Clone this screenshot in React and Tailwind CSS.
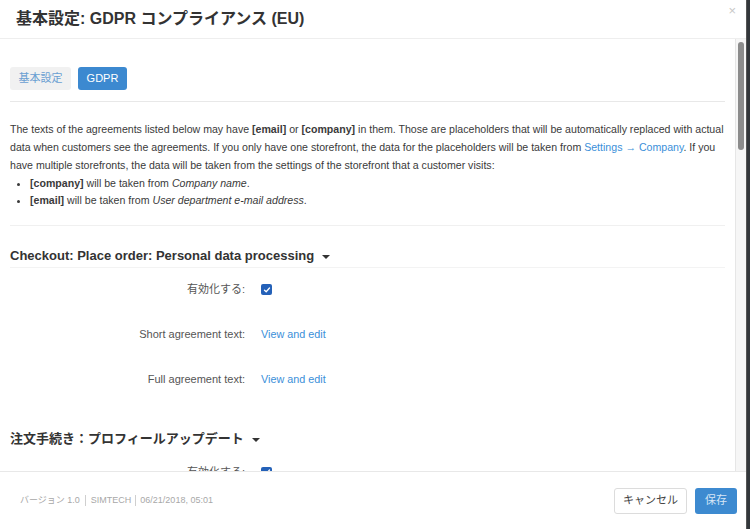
import React from "react";

const font = { fontFamily: '"Liberation Sans", "Noto Sans CJK JP", Arial, sans-serif' };

function Row({ label, children }) {
  return (
    <div className="flex items-center h-[45px]">
      <div className="w-[235px] text-right text-[11px] text-[#555]">{label}</div>
      <div className="pl-[16px] flex items-center">{children}</div>
    </div>
  );
}

function Check() {
  return (
    <span className="w-[11px] h-[11px] rounded-[2px] bg-[#2461b8] flex items-center justify-center">
      <svg width="8" height="8" viewBox="0 0 8 8">
        <path d="M1.5 4.2 L3.2 5.8 L6.5 2" stroke="white" strokeWidth="1.3" fill="none" strokeLinecap="round" strokeLinejoin="round" />
      </svg>
    </span>
  );
}

function Caret() {
  return <span className="inline-block ml-[8px] mt-[2px] w-0 h-0 border-l-[4px] border-r-[4px] border-t-[4px] border-l-transparent border-r-transparent border-t-[#333]" />;
}

export default function App() {
  return (
    <div className="w-[750px] h-[529px] flex bg-[#33373b] overflow-hidden" style={font}>
      <div className="w-[746px] h-full bg-white flex flex-col">
        <div className="h-[39px] shrink-0 border-b border-[#eeeeee] flex items-center justify-between pl-[16px] pr-[10px]">
          <div className="text-[16px] font-bold text-[#333]">基本設定: GDPR コンプライアンス (EU)</div>
          <div className="text-[13px] text-[#c8c8c8] -mt-[16px]">×</div>
        </div>
        <div className="flex-1 flex min-h-0">
          <div className="flex-1 overflow-hidden px-[10px]">
            <div className="pt-[28px] flex gap-[7px]">
              <div className="h-[23px] w-[61px] rounded-[3px] bg-[#f1f1f1] text-[#6a9fd2] text-[11px] flex items-center justify-center">基本設定</div>
              <div className="h-[23px] w-[49px] rounded-[3px] bg-[#3c89d0] text-white text-[11px] flex items-center justify-center">GDPR</div>
            </div>
            <div className="mt-[11px] border-t border-[#e8e8e8]" />
            <div className="mt-[18px] text-[10.6px] leading-[18px] text-[#3a3a3a] whitespace-nowrap">
              The texts of the agreements listed below may have <b>[email]</b> or <b>[company]</b> in them. Those are placeholders that will be automatically replaced with actual<br />
              data when customers see the agreements. If you only have one storefront, the data for the placeholders will be taken from <span className="text-[#3b8fd9]">Settings → Company</span>. If you<br />
              have multiple storefronts, the data will be taken from the settings of the storefront that a customer visits:
            </div>
            <ul className="mt-[1px] text-[10.6px] leading-[17px] text-[#3a3a3a] list-disc pl-[20px]">
              <li><b>[company]</b> will be taken from <i>Company name</i>.</li>
              <li><b>[email]</b> will be taken from <i>User department e-mail address</i>.</li>
            </ul>
            <div className="mt-[16px] border-t border-[#f0f0f0]" />
            <div className="h-[42px] border-b border-[#f3f3f3] flex items-center pt-[18px]">
              <span className="text-[13px] font-bold text-[#333]">Checkout: Place order: Personal data processing</span>
              <Caret />
            </div>
            <div className="-mt-[1px]">
              <Row label="有効化する:"><Check /></Row>
              <Row label="Short agreement text:"><span className="text-[10.8px] text-[#3b8fd9]">View and edit</span></Row>
              <Row label="Full agreement text:"><span className="text-[10.8px] text-[#3b8fd9]">View and edit</span></Row>
            </div>
            <div className="mt-[27px] flex items-center">
              <span className="text-[13px] font-bold text-[#333]">注文手続き：プロフィールアップデート</span>
              <Caret />
            </div>
            <div className="mt-[1px]">
              <Row label="有効化する:"><Check /></Row>
            </div>
          </div>
          <div className="w-[11px] shrink-0 bg-[#f6f6f6] border-l border-[#e6e6e6] pt-[3px] flex justify-center">
            <div className="w-[6px] h-[108px] rounded-full bg-[#8c8c8c]" />
          </div>
        </div>
        <div className="h-[58px] shrink-0 border-t border-[#e8e8e8] flex items-center justify-between pl-[20px] pr-[9px]">
          <div className="flex items-center text-[9px] text-[#a8a8a8]">
            <span>バージョン 1.0</span>
            <span className="mx-[5px] h-[11px] border-l border-[#cfcfcf]" />
            <span>SIMTECH</span>
            <span className="mx-[4px] h-[11px] border-l border-[#cfcfcf]" />
            <span>06/21/2018, 05:01</span>
          </div>
          <div className="flex gap-[8px]">
            <div className="h-[26px] w-[73px] rounded-[3px] border border-[#dcdcdc] bg-white text-[11px] text-[#444] flex items-center justify-center">キャンセル</div>
            <div className="h-[26px] w-[42px] rounded-[3px] bg-[#3d8ad0] text-[11px] text-[#d6e6f6] flex items-center justify-center">保存</div>
          </div>
        </div>
      </div>
      <div className="flex-1 border-l border-[#555]" />
    </div>
  );
}
